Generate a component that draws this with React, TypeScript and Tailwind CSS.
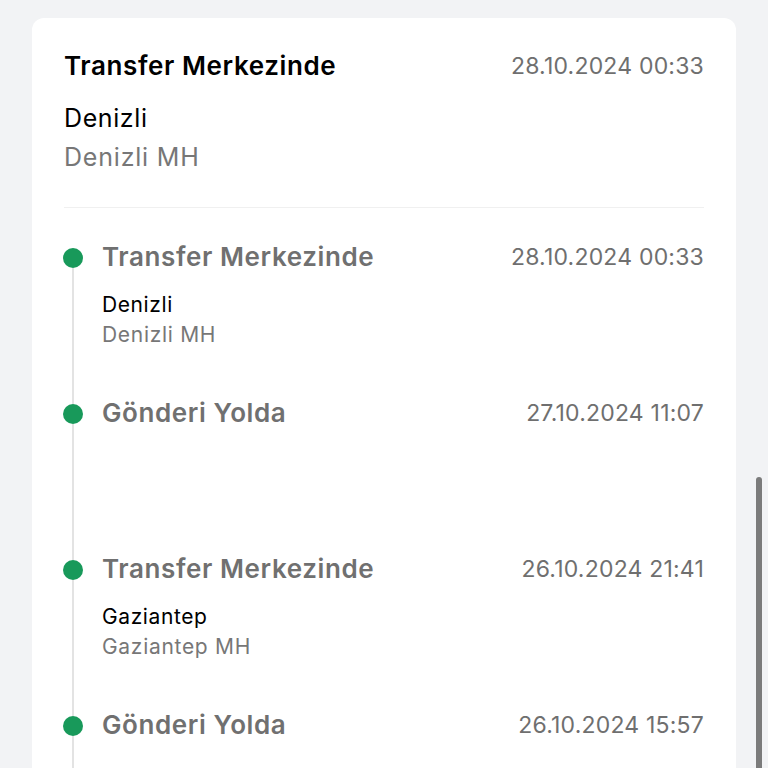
import React from "react";

type Step = {
  title: string;
  date: string;
  city?: string;
  branch?: string;
};

const steps: Step[] = [
  { title: "Transfer Merkezinde", date: "28.10.2024 00:33", city: "Denizli", branch: "Denizli MH" },
  { title: "Gönderi Yolda", date: "27.10.2024 11:07" },
  { title: "Transfer Merkezinde", date: "26.10.2024 21:41", city: "Gaziantep", branch: "Gaziantep MH" },
  { title: "Gönderi Yolda", date: "26.10.2024 15:57" },
];

const App: React.FC = () => {
  return (
    <div
      className="min-h-screen bg-[#f2f3f5] px-8 pt-[18px] overflow-hidden"
      style={{ fontFamily: "Inter, 'Noto Sans', sans-serif" }}
    >
      <div className="bg-white rounded-xl px-8 pt-[33px] pb-40">
        <div className="flex items-center justify-between">
          <h1 className="text-[26px] leading-[30px] font-semibold tracking-[0.6px] text-black">
            Transfer Merkezinde
          </h1>
          <span className="text-[23px] leading-[30px] tracking-[0.2px] text-[#6f6f6f]">
            28.10.2024 00:33
          </span>
        </div>
        <div className="mt-[18px] pb-[30px] border-b border-[#f0f0f0]">
          <p className="text-[25px] leading-[39px] tracking-[0.6px] text-black">Denizli</p>
          <p className="text-[25px] leading-[39px] tracking-[0.8px] text-[#777777]">Denizli MH</p>
        </div>

        <div className="pt-[34px]">
          {steps.map((s, i) => (
            <div key={i} className="flex h-[156px]">
              <div className="w-[20px] flex flex-col items-center shrink-0 -ml-[1px] mr-[19px]">
                <div className={`w-[2px] h-[6px] ${i === 0 ? "bg-transparent" : "bg-[#e3e3e3]"}`} />
                <div className="w-[20px] h-[20px] rounded-full bg-[#18995a] shrink-0" />
                <div className="w-[2px] flex-1 bg-[#e3e3e3]" />
              </div>
              <div className="flex-1">
                <div className="flex items-center justify-between">
                  <span className="text-[26px] leading-[30px] font-semibold tracking-[0.6px] text-[#707070]">
                    {s.title}
                  </span>
                  <span className="text-[23px] leading-[30px] tracking-[0.2px] text-[#6f6f6f]">{s.date}</span>
                </div>
                {s.city && (
                  <div className="mt-[18px]">
                    <p className="text-[21px] leading-[30px] tracking-[0.6px] text-black">{s.city}</p>
                    <p className="text-[21px] leading-[30px] tracking-[0.7px] text-[#777777]">{s.branch}</p>
                  </div>
                )}
              </div>
            </div>
          ))}
        </div>
      </div>

      <div className="fixed right-[6px] top-[477px] w-[6px] h-[320px] rounded-full bg-[#7b7b7b]" />
    </div>
  );
};

export default App;
